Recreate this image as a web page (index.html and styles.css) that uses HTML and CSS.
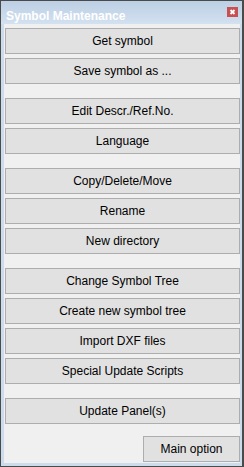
FILE: index.html
```
<!DOCTYPE html>
<html>
<head>
<meta charset="utf-8">
<link rel="stylesheet" href="styles.css">
</head>
<body>
<div class="window">
  <div class="titlebar">
    <span class="title">Symbol Maintenance</span>
    <span class="close"><svg width="11" height="10" viewBox="0 0 11 10"><path d="M3.5 3 L7.5 7 M7.5 3 L3.5 7" stroke="#fff" stroke-width="1.8" fill="none"/></svg></span>
  </div>
  <div class="content">
    <div class="group">
      <button class="btn">Get symbol</button>
      <button class="btn">Save symbol as ...</button>
    </div>
    <div class="group">
      <button class="btn">Edit Descr./Ref.No.</button>
      <button class="btn">Language</button>
    </div>
    <div class="group">
      <button class="btn">Copy/Delete/Move</button>
      <button class="btn">Rename</button>
      <button class="btn">New directory</button>
    </div>
    <div class="group">
      <button class="btn">Change Symbol Tree</button>
      <button class="btn">Create new symbol tree</button>
      <button class="btn">Import DXF files</button>
      <button class="btn">Special Update Scripts</button>
    </div>
    <div class="group">
      <button class="btn">Update Panel(s)</button>
    </div>
    <div class="footer">
      <button class="btn main">Main option</button>
    </div>
  </div>
</div>
</body>
</html>
```
FILE: styles.css
```
html, body {
  margin: 0;
  padding: 0;
}
body {
  font-family: "Liberation Sans", Arial, sans-serif;
  font-size: 12px;
}
.window {
  box-sizing: border-box;
  width: 244px;
  height: 467px;
  border: 1px solid #4a4a4a;
  border-right-width: 2px;
  background: #cddcec;
  padding: 0 2px 3px 3px;
  display: flex;
  flex-direction: column;
}
.titlebar {
  height: 23px;
  display: flex;
  align-items: flex-start;
  justify-content: space-between;
  background: linear-gradient(#bccfe4, #d3e1f0);
  margin: 0 -2px 0 -3px;
  padding: 0 3px 0 5px;
}
.title {
  margin-top: 8px;
  color: #fff;
  font-weight: bold;
  font-size: 12px;
  line-height: 14px;
}
.close {
  margin-top: 6px;
  margin-right: 1px;
  width: 11px;
  height: 10px;
  background: #c75050;
  display: flex;
}
.content {
  flex: 1;
  background: #f0f0f0;
  padding: 4px 0 1px 1px;
  display: flex;
  flex-direction: column;
  gap: 14px;
}
.group {
  display: flex;
  flex-direction: column;
  gap: 4px;
}
.btn {
  box-sizing: border-box;
  height: 26px;
  width: 100%;
  margin: 0;
  padding: 0;
  border: 1px solid #adadad;
  background: #e1e1e1;
  color: #000;
  font-family: "Liberation Sans", Arial, sans-serif;
  font-size: 12px;
}
.footer {
  display: flex;
  justify-content: flex-end;
  margin-top: -2px;
}
.btn.main {
  width: 97px;
}
```
